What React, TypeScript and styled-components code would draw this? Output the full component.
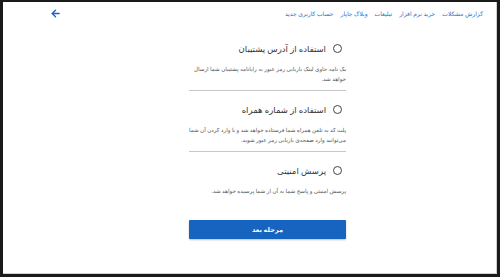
import React from "react";
import styled, { createGlobalStyle } from "styled-components";

const Global = createGlobalStyle`
  html, body { margin: 0; padding: 0; background: #fff; }
  body { font-family: "Noto Sans", "DejaVu Sans", sans-serif; }
  * { box-sizing: border-box; }
`;

const Frame = styled.div`
  width: 500px;
  height: 277px;
  border-style: solid;
  border-color: #1a1a1a;
  border-width: 2px 3px 3px 3px;
  background: #fff;
  display: flex;
  flex-direction: column;
  overflow: hidden;
`;

const Inner = styled.div`
  flex: 1;
  border-right: 1px solid #d0d0d0;
  border-bottom: 1px solid #d0d0d0;
  display: flex;
  flex-direction: column;
`;

const TopBar = styled.div`
  direction: rtl;
  display: flex;
  align-items: center;
  justify-content: space-between;
  padding: 5px 13px 0 47px;
  height: 18px;
`;

const Links = styled.nav`
  display: flex;
  gap: 7px;
`;

const NavLink = styled.a`
  font-size: 6px;
  color: #2a6fc9;
  text-decoration: none;
  white-space: nowrap;
`;

const BackBtn = styled.span`
  display: flex;
  color: #1e63c4;
`;

const Column = styled.main`
  direction: rtl;
  width: 157px;
  margin: 20px 0 0 186px;
  display: flex;
  flex-direction: column;
`;

const Option = styled.label<{ $last?: boolean }>`
  display: flex;
  flex-direction: column;
  padding-bottom: ${(p) => (p.$last ? "0" : "6px")};
  border-bottom: ${(p) => (p.$last ? "none" : "1px solid #c8c8c8")};
  margin-bottom: ${(p) => (p.$last ? "0" : "10px")};
`;

const Head = styled.div`
  display: flex;
  align-items: center;
  gap: 7px;
  padding-right: 4px;
  height: 16px;
`;

const Radio = styled.span`
  width: 9px;
  height: 9px;
  border-radius: 50%;
  border: 1.3px solid #444;
  flex-shrink: 0;
`;

const Title = styled.span`
  font-size: 8.5px;
  color: #333;
`;

const Desc = styled.p`
  margin: 8px 0 0 0;
  font-size: 5.6px;
  line-height: 10px;
  color: #555;
`;

const Next = styled.button`
  margin-top: 24px;
  height: 19px;
  background: #1663c0;
  color: #fff;
  border: none;
  border-radius: 1px;
  font-family: inherit;
  font-size: 6.5px;
  font-weight: bold;
  box-shadow: 0 1px 2px rgba(0,0,0,0.25);
`;

const links = ["گزارش مشکلات", "خرید نرم افزار", "تبلیغات", "وبلاگ چاپار", "حساب کاربری جدید"];

const options = [
  {
    title: "استفاده از آدرس پشتیبان",
    desc: "یک نامه حاوی لینک بازیابی رمز عبور به رایانامه پشتیبان شما ارسال خواهد شد.",
  },
  {
    title: "استفاده از شماره همراه",
    desc: "پلت کد به تلفن همراه شما فرستاده خواهد شد و با وارد کردن آن شما می‌توانید وارد صفحه‌ی بازیابی رمز عبور شوید.",
  },
  {
    title: "پرسش امنیتی",
    desc: "پرسش امنیتی و پاسخ شما به آن از شما پرسیده خواهد شد.",
  },
];

export default function App() {
  return (
    <>
      <Global />
      <Frame>
        <Inner>
          <TopBar>
            <Links>
              {links.map((l) => (
                <NavLink key={l} href="#">{l}</NavLink>
              ))}
            </Links>
            <BackBtn>
              <svg width="11" height="11" viewBox="0 0 24 24" fill="none" stroke="currentColor" strokeWidth="3" strokeLinecap="round" strokeLinejoin="round">
                <path d="M20 12H5" />
                <path d="M12 5l-7 7 7 7" />
              </svg>
            </BackBtn>
          </TopBar>
          <Column>
            {options.map((o, i) => (
              <Option key={o.title} $last={i === options.length - 1}>
                <Head>
                  <Radio />
                  <Title>{o.title}</Title>
                </Head>
                <Desc>{o.desc}</Desc>
              </Option>
            ))}
            <Next>مرحله بعد</Next>
          </Column>
        </Inner>
      </Frame>
    </>
  );
}
